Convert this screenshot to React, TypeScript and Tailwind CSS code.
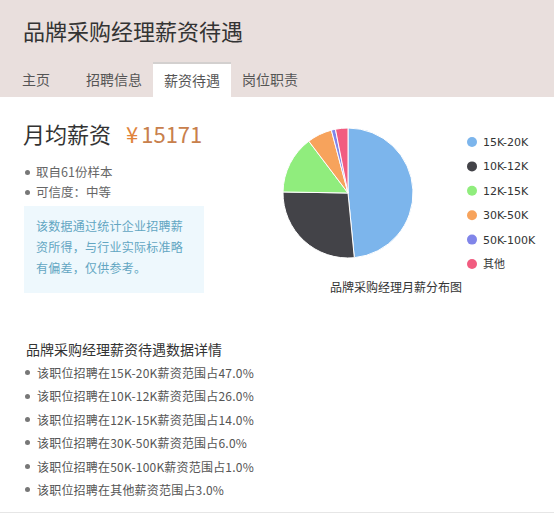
import React from "react";

const slices = [
  { label: "15K-20K", value: 47, color: "#7cb5ec" },
  { label: "10K-12K", value: 26, color: "#434348" },
  { label: "12K-15K", value: 14, color: "#90ed7d" },
  { label: "30K-50K", value: 6, color: "#f7a35c" },
  { label: "50K-100K", value: 1, color: "#8085e9" },
  { label: "其他", value: 3, color: "#f15c80" },
];

const details = [
  "该职位招聘在15K-20K薪资范围占47.0%",
  "该职位招聘在10K-12K薪资范围占26.0%",
  "该职位招聘在12K-15K薪资范围占14.0%",
  "该职位招聘在30K-50K薪资范围占6.0%",
  "该职位招聘在50K-100K薪资范围占1.0%",
  "该职位招聘在其他薪资范围占3.0%",
];

const tabs = ["主页", "招聘信息", "薪资待遇", "岗位职责"];

const font = { fontFamily: '"Noto Sans CJK SC", "Noto Sans", sans-serif' };

function arcPath(cx: number, cy: number, r: number, a0: number, a1: number) {
  const p = (a: number) => [cx + r * Math.sin(a), cy - r * Math.cos(a)];
  const [x0, y0] = p(a0);
  const [x1, y1] = p(a1);
  const large = a1 - a0 > Math.PI ? 1 : 0;
  return `M ${cx} ${cy} L ${x0} ${y0} A ${r} ${r} 0 ${large} 1 ${x1} ${y1} Z`;
}

function PieChart() {
  const total = slices.reduce((s, x) => s + x.value, 0);
  let acc = 0;
  const cx = 78;
  const cy = 96;
  const r = 65;
  return (
    <svg width="284" height="205" viewBox="0 0 284 205">
      {slices.map((s) => {
        const a0 = (acc / total) * Math.PI * 2;
        acc += s.value;
        const a1 = (acc / total) * Math.PI * 2;
        return (
          <path key={s.label} d={arcPath(cx, cy, r, a0, a1)} fill={s.color} stroke="#fff" strokeWidth="1" strokeLinejoin="round" />
        );
      })}
      {slices.map((s, i) => {
        const y = 45 + i * 24.4;
        return (
          <g key={s.label}>
            <circle cx="202" cy={y} r="5" fill={s.color} />
            <text x="213" y={y + 4} fontSize="11" fill="#333" style={{ fontFamily: '"DejaVu Sans", "Noto Sans CJK SC", sans-serif' }}>
              {s.label}
            </text>
          </g>
        );
      })}
      <text x="126" y="195" fontSize="12" fill="#333" textAnchor="middle" style={font}>
        品牌采购经理月薪分布图
      </text>
    </svg>
  );
}

export default function App() {
  return (
    <div className="w-[554px] h-[525px] bg-white overflow-hidden" style={font}>
      {/* header */}
      <div className="h-[97px] bg-[#e9dfdd] flex flex-col">
        <h1 className="pt-[15px] pl-[23px] text-[22px] leading-[30px] text-[#333] font-normal">品牌采购经理薪资待遇</h1>
        <div className="mt-auto flex pl-[11px] h-[35px]">
          {tabs.map((t, i) => (
            <div
              key={t}
              className={`px-[11px] flex items-center text-[14px] text-[#555] ${i === 0 ? "mr-[14px]" : ""} ${
                i === 2 ? "bg-white border-t-2 border-[#d3d0cf]" : ""
              }`}
            >
              {t}
            </div>
          ))}
        </div>
      </div>

      {/* summary + chart */}
      <div className="flex h-[205px]">
        <div className="w-[270px] pl-[23px] pt-[21px]">
          <div className="flex items-baseline leading-[30px]">
            <span className="text-[22px] text-[#333]">月均薪资</span>
            <span className="ml-[15px] mr-[3px] text-[22px] text-[#e0833c]">¥</span>
            <span className="text-[22px] text-[#c8804c]">15171</span>
          </div>
          <ul className="mt-[14px] text-[12.5px] text-[#666] leading-[20px]">
            <li className="flex items-center pl-[2px]">
              <span className="w-[5px] h-[5px] rounded-full bg-[#777] mr-[6px]" />
              取自61份样本
            </li>
            <li className="flex items-center pl-[2px]">
              <span className="w-[5px] h-[5px] rounded-full bg-[#777] mr-[6px]" />
              可信度：中等
            </li>
          </ul>
          <div className="mt-[4px] ml-[1px] w-[180px] h-[87px] bg-[#eef8fd] px-[12px] pt-[9px] text-[12px] tracking-[0.25px] leading-[21px] text-[#62a6c2]">
            该数据通过统计企业招聘薪资所得，与行业实际标准略有偏差，仅供参考。
          </div>
        </div>
        <div className="flex-1">
          <PieChart />
        </div>
      </div>

      {/* details */}
      <div className="border-b border-[#e6e6e6] pb-[11px]">
        <div className="mt-[37px] pl-[26px] text-[14px] leading-[20px] text-[#333]">品牌采购经理薪资待遇数据详情</div>
        <ul className="mt-[2px] pl-[25px] text-[12px] tracking-[0.2px] leading-[23.4px] text-[#555]">
          {details.map((d) => (
            <li key={d} className="flex items-center">
              <span className="w-[5px] h-[5px] rounded-full bg-[#777] mr-[7px]" />
              {d}
            </li>
          ))}
        </ul>
      </div>
    </div>
  );
}
